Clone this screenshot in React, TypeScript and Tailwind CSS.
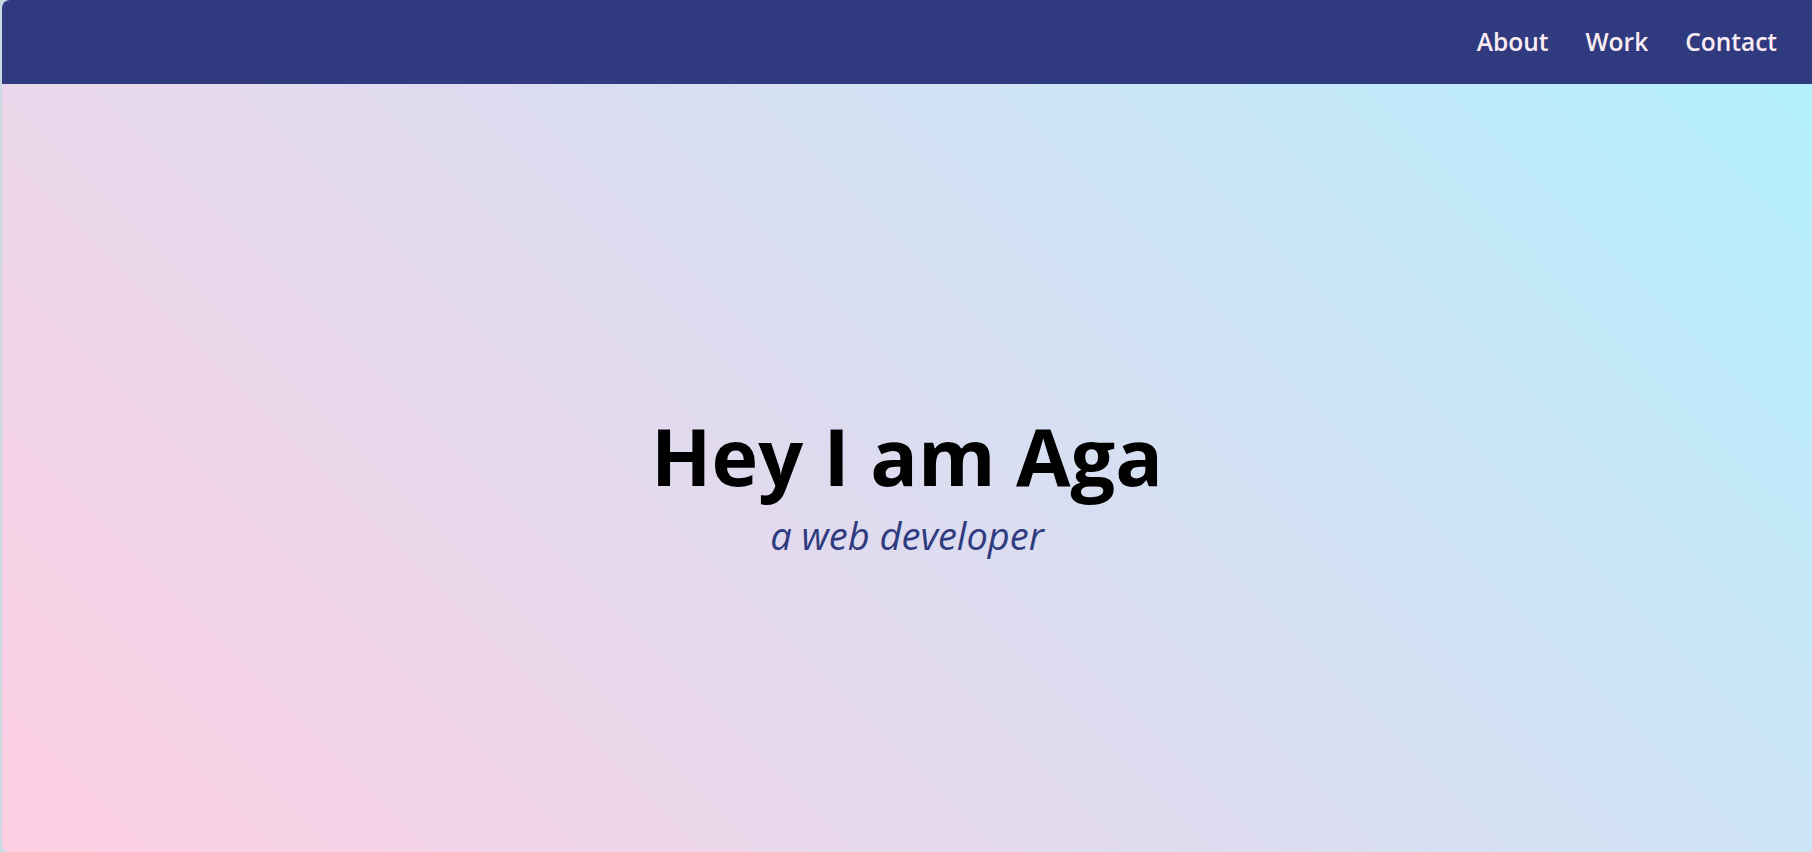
export default function App() {
  return (
    <div className="h-[852px] w-full bg-[#cbd9e2] pl-[2px] font-['Open_Sans',sans-serif]">
      <div className="flex h-full flex-col overflow-hidden rounded-l-lg">
        <header className="flex h-[84px] shrink-0 items-center justify-end bg-[#2f3b7e] pr-[35px]">
          <nav className="flex items-center gap-[37px] text-[24.5px] font-semibold text-[#fcecf3]">
            <a href="#about">About</a>
            <a href="#work">Work</a>
            <a href="#contact">Contact</a>
          </nav>
        </header>
        <main className="flex flex-1 flex-col items-center justify-center bg-linear-45 from-[#ffcfe3] via-[#dcdcf0] to-[#b3f0fe] pt-[28px]">
          <h1 className="text-[79px] font-bold leading-[1.362] text-black">Hey I am Aga</h1>
          <p className="text-[38px] italic leading-[1.362] text-[#2f3b7e]">a web developer</p>
        </main>
      </div>
    </div>
  )
}
